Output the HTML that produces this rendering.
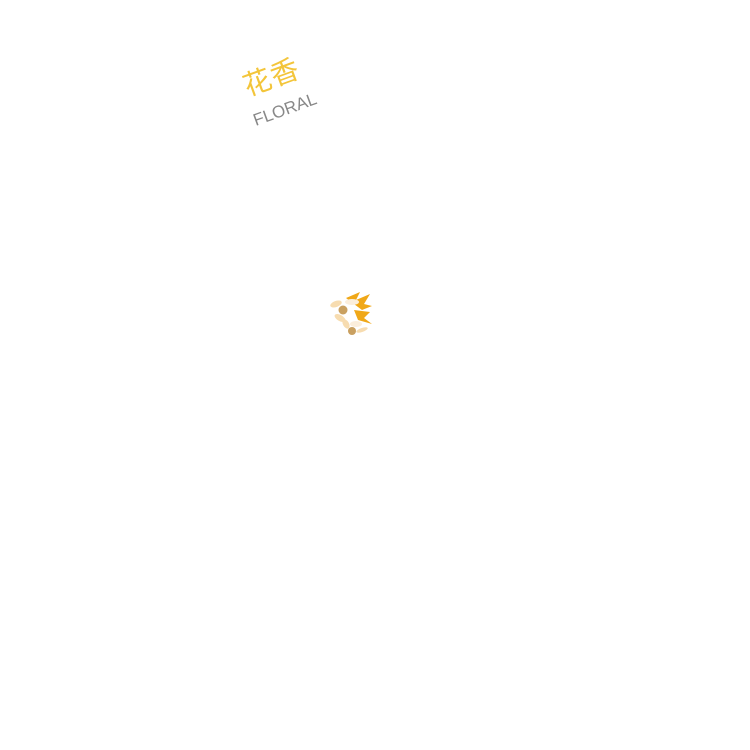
<!DOCTYPE html>
<html><head><meta charset="utf-8"><style>
html,body{margin:0;padding:0;background:#fff;width:750px;height:750px;overflow:hidden;position:relative}
.t{position:absolute;transform:rotate(-20deg);transform-origin:center;white-space:nowrap}
.cn{left:242px;top:56px;font-family:"Liberation Sans","Noto Sans CJK SC",sans-serif;font-size:28px;color:#f3c53a;letter-spacing:1px}
.en{left:252px;top:100px;font-family:"Liberation Sans",sans-serif;font-size:17px;color:#888;font-weight:300}
</style></head><body>
<div class="t cn">花香</div>
<div class="t en">FLORAL</div>
<svg style="position:absolute;left:326px;top:288px" width="52" height="50" viewBox="0 0 52 50">
<g fill="#f0a818">
<path d="M20 10 L34 4 L30 12 L44 6 L38 16 L46 18 L36 22 Z"/>
<path d="M28 22 L44 24 L38 30 L46 36 L32 32 Z"/>
</g>
<g fill="#f7d9a8" opacity="0.9">
<ellipse cx="10" cy="16" rx="6" ry="3" transform="rotate(-20 10 16)"/>
<ellipse cx="14" cy="30" rx="6" ry="3" transform="rotate(30 14 30)"/>
<ellipse cx="20" cy="36" rx="5" ry="3" transform="rotate(60 20 36)"/>
<ellipse cx="36" cy="42" rx="6" ry="2" transform="rotate(-20 36 42)"/>
</g>
<g fill="#fbeedc">
<ellipse cx="26" cy="14" rx="7" ry="3"/>
<ellipse cx="30" cy="36" rx="6" ry="3"/>
</g>
<circle cx="17" cy="22" r="4.5" fill="#c9a060"/>
<circle cx="26" cy="43" r="4" fill="#c9a060"/>
</svg>
</body></html>
